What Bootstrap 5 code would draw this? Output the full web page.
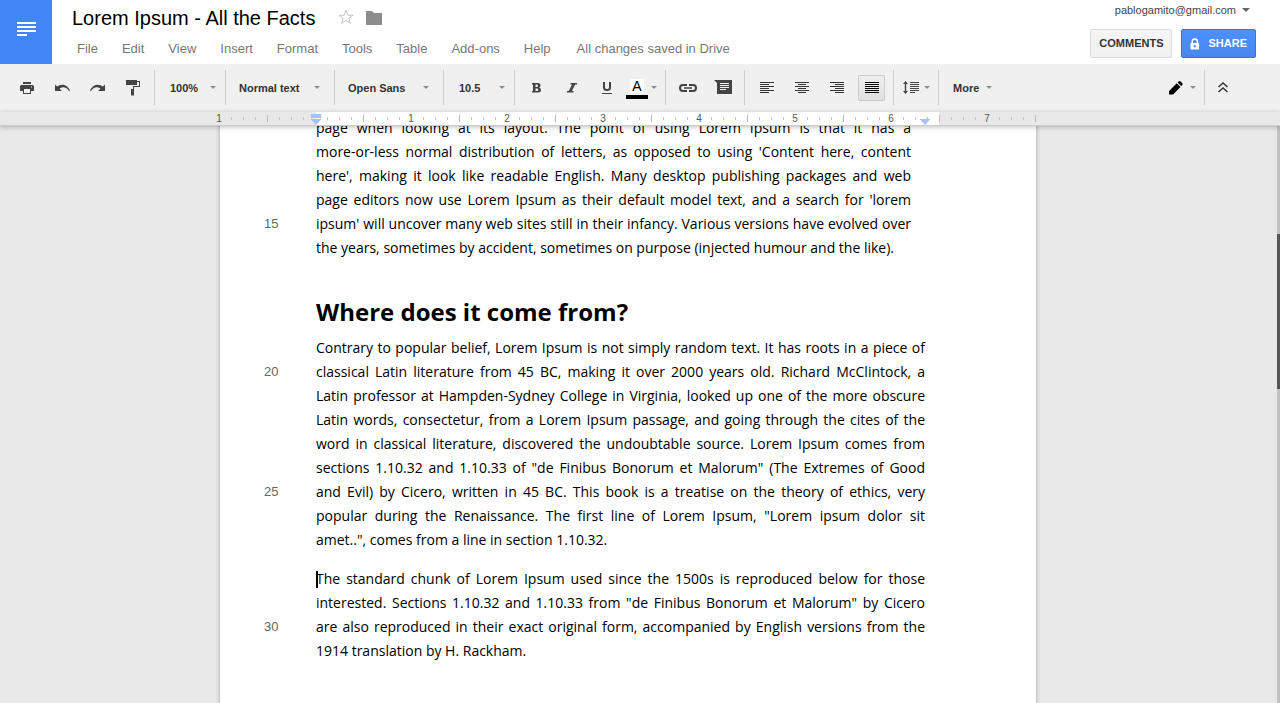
<!DOCTYPE html>
<html lang="en">
<head>
<meta charset="utf-8">
<meta name="viewport" content="width=device-width, initial-scale=1">
<title>Lorem Ipsum - All the Facts</title>
<link rel="stylesheet" href="https://cdn.jsdelivr.net/npm/bootstrap@5.3.0/dist/css/bootstrap.min.css">
<style>
  body { font-family: "Liberation Sans", Arial, sans-serif; font-size: 13px; line-height: 16px; color: #000; background: #e8e8e8; }
  svg { display: block; flex: none; }
  button { font: inherit; color: inherit; }

  /* header */
  .app-home { width: 52px; height: 64px; background: #4285f4; padding: 22px 0 0 17px; }
  .doc-title { font-size: 20px; line-height: 24px; margin: 0; font-weight: 400; }
  .title-row { padding-top: 6px; height: 41px; }
  .title-marks { gap: 12px; padding: 3px 0 0 23px; }
  .menu-row { padding-left: 5px; gap: 24px; color: #777; }
  .menu-row a { color: #777; text-decoration: none; }
  .menu-row span { padding-left: 2px; }
  .header-end { padding-right: 24px; }
  .account { font-size: 11px; line-height: 14px; color: #444; gap: 6px; padding: 3px 6px 0 0; }
  .head-buttons { gap: 9px; padding-top: 12px; }
  .btn-head { --bs-btn-border-radius: 2px; --bs-btn-padding-y: 0; --bs-btn-padding-x: 8px; --bs-btn-font-size: 11px; --bs-btn-line-height: 27px; --bs-btn-font-weight: 700; height: 29px; }
  .btn-comments { --bs-btn-bg: #f5f5f5; --bs-btn-border-color: #dcdcdc; --bs-btn-color: #333; background-image: linear-gradient(#f5f5f5, #f1f1f1); }
  .btn-share { --bs-btn-bg: #4787ed; --bs-btn-border-color: #3079ed; --bs-btn-color: #fff; background-image: linear-gradient(#4d90fe, #4787ed); }
  .caret { width: 0; height: 0; border: 3px solid transparent; border-top-color: #8c8c8c; border-bottom: 0; }
  .caret-lg { border-width: 4px; border-bottom: 0; border-top-color: #666; }

  /* toolbar */
  .tools { height: 48px; background: #f0f0f0; font-size: 11px; font-weight: 700; color: #333; padding: 0 40px 1px 0; }
  .tools button { background: none; border: 0; padding: 0; }
  .tool-group { padding: 0 4px; }
  .tool-group.first { padding-left: 10px; }
  .tool-icon { width: 35px; height: 27px; display: flex; align-items: center; justify-content: center; }
  .tool-icon.pressed span { display: flex; align-items: center; justify-content: center; width: 27px; height: 26px; border: 1px solid #ccc; border-radius: 2px; background: linear-gradient(#eee, #e0e0e0); color: #000; }
  .tool-drop { display: flex; align-items: center; justify-content: space-between; height: 27px; }
  .tools .tool-drop.narrow { width: 70px; padding: 0 9px 0 15px; }
  .tools .tool-drop.wide { width: 108px; padding: 0 14px 0 13px; }
  .tools .tool-drop.plain { gap: 7px; padding: 0 14px; }
  .tools .tool-drop.spacing { width: 44px; padding: 0 8px 0 9px; }
  .tools .tool-drop.color { width: 37px; padding: 0 4px 0 2px; }
  .rule-v { width: 1px; height: 35px; background: #ccc; }
  .swatch { width: 22px; height: 22px; padding-top: 2px; border-bottom: 4px solid #000; font-size: 14px; font-weight: 400; color: #000; }
  .swatch span { display: block; width: 14px; height: 14px; line-height: 15px; background: #fff; margin: 0 auto; text-align: center; }

  /* ruler and page share one centred column */
  .column-frame { padding-right: 24px; }
  .page-column { width: 816px; max-width: 100%; margin: 0 auto; }
  .ruler { height: 14px; border-bottom: 1px solid #ccc; box-shadow: 0 1px 5px rgba(0,0,0,.25); background: #e8e8e8; }
  .ruler ol { display: flex; justify-content: flex-end; list-style: none; padding: 0; margin-bottom: 0; background: linear-gradient(#fff, #fff) 96px 0 / 623px 100% no-repeat; font-size: 10px; line-height: 13px; color: #555; }
  .ruler li { flex: 0 0 96px; height: 13px; display: flex; }
  .ruler li span { width: 14px; padding-right: 2px; text-align: center; }
  .ruler li::before, .ruler li::after { content: ""; flex: 1; background: linear-gradient(90deg, transparent 11px, #c4c4c4 11px) 0 5px / 12px 3px repeat-x; }
  .ruler li::after { background: linear-gradient(#bbb, #bbb) right 3px / 1px 7px no-repeat, linear-gradient(90deg, transparent 11px, #c4c4c4 11px) 5px 5px / 12px 3px repeat-x; }
  .ruler li:first-child::before { visibility: hidden; }
  .indent { position: absolute; top: 2px; transform: translateX(-50%); }

  .scroller { min-height: 0; }
  .sheet { background: #fff; min-height: 900px; box-shadow: 0 0 4px rgba(0,0,0,.3); margin-top: -10px; padding-right: 111px; font-family: "Open Sans", sans-serif; font-size: 14px; line-height: 24px; }
  .sheet p { margin: 0 0 15px; }
  .sheet p.inset-end { padding-right: 14px; margin: 0; }
  .sheet h2 { font-size: 24px; font-weight: 700; line-height: 36px; margin: 0; padding: 34px 0 6px 96px; }
  .text-line { display: flex; }
  .line-no { flex: 0 0 96px; padding-left: 44px; font-family: "Liberation Sans", Arial, sans-serif; font-size: 13px; color: #666; }
  .words { flex: 1; text-align-last: justify; white-space: nowrap; }
  .text-line:last-child .words { text-align-last: start; }
  .text-cursor { position: absolute; width: 2px; height: 17px; background: #000; margin-top: 4px; }
  .scroll-track { position: absolute; top: 0; right: 0; bottom: 0; width: 3px; background: #c1c1c1; padding-top: 108px; }
  .scroll-thumb { height: 155px; background: #555; }
</style>
</head>
<body>
<div class="d-flex flex-column vh-100 overflow-hidden">

  <header class="d-flex flex-shrink-0 bg-white">
    <a class="app-home" href="#" aria-label="Docs home">
      <svg width="19" height="14" fill="#fff"><path d="M0 0h19v2H0zM0 4h19v2H0zM0 8h19v2H0zM0 12h10v2H0z"/></svg>
    </a>
    <div class="flex-grow-1 ps-3 ms-1">
      <div class="title-row d-flex">
        <h1 class="doc-title">Lorem Ipsum - All the Facts</h1>
        <div class="title-marks d-flex">
          <a href="#" aria-label="Star"><svg width="16" height="16" fill="none" stroke="#c4c4c4"><path d="M8 1.200l1.800 5h5.200l-4.200 3.100 1.600 5.200L8 11.400l-4.400 3.100 1.600-5.200L1 6.200h5.200z"/></svg></a>
          <a href="#" aria-label="Move to folder"><svg width="16" height="16" fill="#8c8c8c"><path d="M0 2h6l2 2h8v12H0z"/></svg></a>
        </div>
      </div>
      <nav class="menu-row d-flex">
        <a href="#">File</a><a href="#">Edit</a><a href="#">View</a><a href="#">Insert</a><a href="#">Format</a><a href="#">Tools</a><a href="#">Table</a><a href="#">Add-ons</a><a href="#">Help</a><span>All changes saved in Drive</span>
      </nav>
    </div>
    <div class="header-end d-flex flex-column align-items-end">
      <a href="#" class="account d-flex align-items-center text-decoration-none">pablogamito@gmail.com<span class="caret caret-lg"></span></a>
      <div class="head-buttons d-flex">
        <button class="btn btn-head btn-comments">COMMENTS</button>
        <button class="btn btn-head btn-share d-flex align-items-center gap-2">
          <svg width="10" height="12" fill="#fff"><path fill-rule="evenodd" d="M.5 5h1V3.500a3.300 3.300 0 0 1 6.600 0V5h1v6.500H.5zM3 5h3.600V3.500a1.800 1.800 0 0 0-3.600 0zM4.800 7a1.200 1.200 0 1 0 .01 0z"/></svg>SHARE</button>
      </div>
    </div>
  </header>

  <div class="tools d-flex flex-shrink-0 align-items-center" role="toolbar" aria-label="Formatting">
    <div class="tool-group first d-flex">
      <button class="tool-icon" aria-label="Print"><svg width="16" height="12" fill="#444"><path fill-rule="evenodd" d="M3 0h8v2H3zM1.500 3h11A1.500 1.500 0 0 1 14 4.500V9h-3v3H3V9H0V4.500A1.500 1.500 0 0 1 1.500 3zM4 7v4h6V7zM11 4.500v1h1v-1z"/></svg></button>
      <button class="tool-icon" aria-label="Undo"><svg width="15" height="8" fill="#444"><path d="M0 .5l2.200 2.100C5-.3 12-.6 15 6.500l-1 .5C11.500 2.700 7.500 2.200 4.500 4.700L7 7H0z"/></svg></button>
      <button class="tool-icon" aria-label="Redo"><svg width="15" height="8" fill="#444"><path d="M15 .5l-2.200 2.100C10-.3 3-.6 0 6.500L1 7c2.500-4.300 6.500-4.800 9.500-2.300L8 7h7z"/></svg></button>
      <button class="tool-icon" aria-label="Paint format"><svg width="15" height="16" fill="#444"><path d="M1 0h11v1h3v6H9v2h0v6.500H6V9h2V6h6V2h-2v3H1z"/></svg></button>
    </div>
    <div class="rule-v"></div>
    <button class="tool-drop narrow">100%<span class="caret"></span></button>
    <div class="rule-v"></div>
    <button class="tool-drop wide">Normal text<span class="caret"></span></button>
    <div class="rule-v"></div>
    <button class="tool-drop wide">Open Sans<span class="caret"></span></button>
    <div class="rule-v"></div>
    <button class="tool-drop narrow">10.5<span class="caret"></span></button>
    <div class="rule-v"></div>
    <div class="tool-group d-flex align-items-center">
      <button class="tool-icon" aria-label="Bold"><svg width="9" height="10" fill="#444"><path fill-rule="evenodd" d="M0 0h6q2.500 0 2.500 2.500Q8.500 4 7.200 4.600 9 5.200 9 7q0 2.500-3 2.500H0V8h1V1.500H0zM3.500 1.500V4h1.200Q6 4 6 2.700T4.700 1.500zM3.500 5.500V8H5q1.300 0 1.300-1.300T5 5.500z"/></svg></button>
      <button class="tool-icon" aria-label="Italic"><svg width="10" height="10" fill="#444"><path d="M3.500 0H10v1.500H8.200L4.800 8h1.700v1.500H0V8h1.700l3.400-6.500H3.500z"/></svg></button>
      <button class="tool-icon" aria-label="Underline"><svg width="10" height="12" fill="none" stroke="#444"><path stroke-width="2" d="M2 0v5.500Q2 8 5 8t3-2.500V0"/><path d="M0 11.500h10"/></svg></button>
      <button class="tool-drop color" aria-label="Text color"><span class="swatch"><span>A</span></span><span class="caret"></span></button>
    </div>
    <div class="rule-v"></div>
    <div class="tool-group d-flex">
      <button class="tool-icon" aria-label="Insert link"><svg width="18" height="8" fill="none" stroke="#444" stroke-width="2"><path d="M8 1H4Q1 1 1 4t3 3h4M10 1h4q3 0 3 3t-3 3h-4"/><path stroke-width="1.500" d="M5 4h8"/></svg></button>
      <button class="tool-icon" aria-label="Insert comment"><svg width="18" height="15" fill="#444"><path fill-rule="evenodd" d="M0 0h18v14H3V3zM6 3v1h9V3zM6 5v1h9V5zM6 7v1h9V7zM6 9v1h6V9z"/></svg></button>
    </div>
    <div class="rule-v"></div>
    <div class="tool-group d-flex">
      <button class="tool-icon" aria-label="Align left"><svg width="14" height="11" stroke="#333"><path d="M0 .5h14M0 2.500h9M0 4.500h14M0 6.500h9M0 8.500h14M0 10.500h9"/></svg></button>
      <button class="tool-icon" aria-label="Align center"><svg width="14" height="11" stroke="#333"><path d="M0 .5h14M3 2.500h8M0 4.500h14M3 6.500h8M0 8.500h14M3 10.500h8"/></svg></button>
      <button class="tool-icon" aria-label="Align right"><svg width="14" height="11" stroke="#333"><path d="M0 .5h14M5 2.500h9M0 4.500h14M5 6.500h9M0 8.500h14M5 10.500h9"/></svg></button>
      <button class="tool-icon pressed" aria-label="Justify" aria-pressed="true"><span><svg width="14" height="11" stroke="#000"><path d="M0 .5h14M0 2.500h14M0 4.500h14M0 6.500h14M0 8.500h14M0 10.500h14"/></svg></span></button>
    </div>
    <div class="rule-v"></div>
    <button class="tool-drop spacing" aria-label="Line spacing"><svg width="16" height="13" fill="#444"><path d="M2.500 0L5 3H3.200v7H5l-2.500 3L0 10h1.800V3H0zM7 1h9v1H7zM7 3h9v1H7zM7 5h9v1H7zM7 7h9v1H7zM7 9h9v1H7zM7 11h5v1H7z"/></svg><span class="caret"></span></button>
    <div class="rule-v"></div>
    <button class="tool-drop plain">More<span class="caret"></span></button>
    <div class="d-flex align-items-center ms-auto">
      <button class="tool-drop plain px-2" aria-label="Editing mode"><svg width="14" height="14" fill="#000"><path d="M0 10l7.800-7.800L11.500 5.900 4 13.500H0zM8.500 1.500L9.700.5Q10.700-.4 11.700.5l1.500 1.500q.9 1 0 2l-1 1z"/></svg><span class="caret"></span></button>
      <div class="rule-v"></div>
      <button class="tool-icon" aria-label="Hide the menus"><svg width="10" height="11" fill="none" stroke="#333" stroke-width="1.500"><path d="M.5 5L5 1l4.500 4M.5 10L5 6l4.500 4"/></svg></button>
    </div>
  </div>

  <div class="ruler column-frame flex-shrink-0 position-relative z-1">
    <ol class="page-column position-relative" aria-label="Ruler">
      <li><span>1</span></li><li><span></span></li><li><span>1</span></li><li><span>2</span></li><li><span>3</span></li><li><span>4</span></li><li><span>5</span></li><li><span>6</span></li><li><span>7</span></li>
      <svg class="indent" style="left:96px" width="11" height="11" fill="#a4c2f9"><path d="M0 0h11v4H0zM0 5h11L5.500 11z"/></svg>
      <svg class="indent" style="left:705px" width="11" height="11" fill="#a4c2f9"><path d="M0 5h11L5.500 11z"/></svg>
    </ol>
  </div>

  <main class="scroller column-frame flex-grow-1 position-relative overflow-hidden">
    <article class="sheet page-column">
      <p class="inset-end">
        <span class="text-line"><span class="line-no"></span><span class="words">page when looking at its layout. The point of using Lorem Ipsum is that it has a</span></span>
        <span class="text-line"><span class="line-no"></span><span class="words">more-or-less normal distribution of letters, as opposed to using 'Content here, content</span></span>
        <span class="text-line"><span class="line-no"></span><span class="words">here', making it look like readable English. Many desktop publishing packages and web</span></span>
        <span class="text-line"><span class="line-no"></span><span class="words">page editors now use Lorem Ipsum as their default model text, and a search for 'lorem</span></span>
        <span class="text-line"><span class="line-no">15</span><span class="words">ipsum' will uncover many web sites still in their infancy. Various versions have evolved over</span></span>
        <span class="text-line"><span class="line-no"></span><span class="words">the years, sometimes by accident, sometimes on purpose (injected humour and the like).</span></span>
      </p>
      <h2>Where does it come from?</h2>
      <p>
        <span class="text-line"><span class="line-no"></span><span class="words">Contrary to popular belief, Lorem Ipsum is not simply random text. It has roots in a piece of</span></span>
        <span class="text-line"><span class="line-no">20</span><span class="words">classical Latin literature from 45 BC, making it over 2000 years old. Richard McClintock, a</span></span>
        <span class="text-line"><span class="line-no"></span><span class="words">Latin professor at Hampden-Sydney College in Virginia, looked up one of the more obscure</span></span>
        <span class="text-line"><span class="line-no"></span><span class="words">Latin words, consectetur, from a Lorem Ipsum passage, and going through the cites of the</span></span>
        <span class="text-line"><span class="line-no"></span><span class="words">word in classical literature, discovered the undoubtable source. Lorem Ipsum comes from</span></span>
        <span class="text-line"><span class="line-no"></span><span class="words">sections 1.10.32 and 1.10.33 of "de Finibus Bonorum et Malorum" (The Extremes of Good</span></span>
        <span class="text-line"><span class="line-no">25</span><span class="words">and Evil) by Cicero, written in 45 BC. This book is a treatise on the theory of ethics, very</span></span>
        <span class="text-line"><span class="line-no"></span><span class="words">popular during the Renaissance. The first line of Lorem Ipsum, "Lorem ipsum dolor sit</span></span>
        <span class="text-line"><span class="line-no"></span><span class="words">amet..", comes from a line in section 1.10.32.</span></span>
      </p>
      <p>
        <span class="text-line"><span class="line-no"></span><span class="words"><i class="text-cursor"></i>The standard chunk of Lorem Ipsum used since the 1500s is reproduced below for those</span></span>
        <span class="text-line"><span class="line-no"></span><span class="words">interested. Sections 1.10.32 and 1.10.33 from "de Finibus Bonorum et Malorum" by Cicero</span></span>
        <span class="text-line"><span class="line-no">30</span><span class="words">are also reproduced in their exact original form, accompanied by English versions from the</span></span>
        <span class="text-line"><span class="line-no"></span><span class="words">1914 translation by H. Rackham.</span></span>
      </p>
    </article>
    <div class="scroll-track"><div class="scroll-thumb"></div></div>
  </main>
</div>
<script src="https://cdn.jsdelivr.net/npm/bootstrap@5.3.0/dist/js/bootstrap.bundle.min.js"></script>
</body>
</html>
